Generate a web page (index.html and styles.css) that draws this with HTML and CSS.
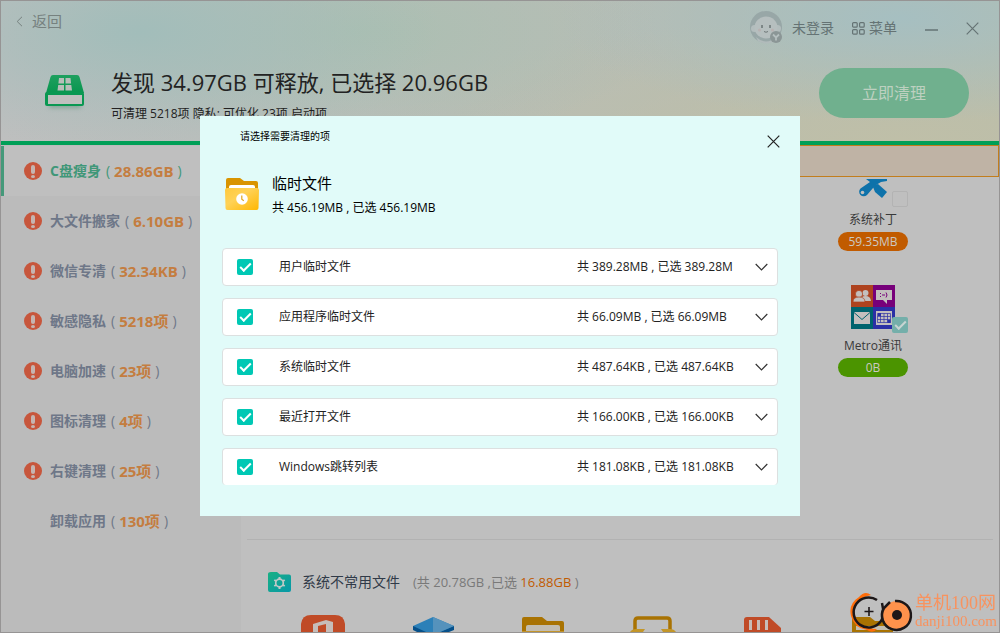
FILE: index.html
```html
<!DOCTYPE html>
<html lang="zh-CN">
<head>
<meta charset="utf-8">
<title>C盘瘦身</title>
<link rel="stylesheet" href="styles.css">
</head>
<body>
<div class="app">
  <header class="header">
    <div class="topbar">
      <a class="back" href="#">
        <svg width="7" height="11" viewBox="0 0 7 11"><path d="M6 .8 1.2 5.5 6 10.2" fill="none" stroke="currentColor"/></svg>
        返回
      </a>
      <div class="account">
        <a class="login" href="#">
          <svg width="34" height="34" viewBox="0 0 34 34">
            <circle cx="16" cy="16" r="16" fill="#98a7a7"/>
            <path d="M6 26q10 9 20 0l-1 4q-9 5-17 0z" fill="#b1bbbb"/>
            <circle cx="4.500" cy="17.500" r="3.500" fill="#b3bdbd"/><circle cx="27.500" cy="17.500" r="3.500" fill="#b3bdbd"/>
            <ellipse cx="16" cy="16.500" rx="11.500" ry="11" fill="#b6bfbf"/>
            <path d="M12 14v3M20 14v3" stroke="#6f7878" stroke-width="1.600"/>
            <path d="M14 20.500q2 1.500 4 0" fill="none" stroke="#6f7878"/>
            <circle cx="9.500" cy="19" r="1.500" fill="#b9b2b2"/><circle cx="22.500" cy="19" r="1.500" fill="#b9b2b2"/>
            <circle cx="26" cy="26" r="6" fill="#8b9696"/>
            <path d="m23 23.500 3 3 3-3M26 26v3.500" fill="none" stroke="#b5bfbf" stroke-width="1.800"/>
          </svg>
          <span>未登录</span>
        </a>
        <button class="menu" type="button">
          <svg width="13" height="13" viewBox="0 0 13 13" fill="none" stroke="currentColor" stroke-width="1.200"><rect x=".6" y=".6" width="4.600" height="4.600" rx="1"/><rect x="7.600" y=".6" width="4.600" height="4.600" rx="1"/><rect x=".6" y="7.600" width="4.600" height="4.600" rx="1"/><rect x="7.600" y="7.600" width="4.600" height="4.600" rx="1"/></svg>
          菜单
        </button>
        <button class="winbtn" type="button" aria-label="最小化"><svg width="13" height="13" viewBox="0 0 13 13"><path d="M0 8h13" stroke="currentColor" stroke-width="1.500"/></svg></button>
        <button class="winbtn" type="button" aria-label="关闭"><svg width="13" height="13" viewBox="0 0 13 13"><path d="m.7.700 11.600 11.600M12.300.7.700 12.300" stroke="currentColor" stroke-width="1.200"/></svg></button>
      </div>
    </div>
    <div class="hero">
      <svg class="hero-icon" width="40" height="40" viewBox="0 2 40 40">
        <defs>
          <linearGradient id="disk" x1="0" y1="0" x2="0" y2="1"><stop offset="0" stop-color="#1fa05f"/><stop offset="1" stop-color="#08964f"/></linearGradient>
          <filter id="soft" x="-30%" y="-50%" width="160%" height="220%"><feGaussianBlur stdDeviation="2"/></filter>
        </defs>
        <rect x="4" y="30" width="32" height="7" fill="#6f9b86" opacity=".7" filter="url(#soft)"/>
        <path d="M8 4h24q2 0 2.500 2L39 22H1L5.500 6Q6 4 8 4z" fill="url(#disk)"/>
        <rect x="0" y="21" width="39" height="14" rx="2" fill="#0a9852"/>
        <rect x="3" y="24" width="34" height="9" fill="#bfc0be"/>
        <path d="M14 7h5v5.500h-5.600zM20.500 7h5l.6 5.500h-5.600zM13.200 14H19v5.500h-6.500zM20.500 14h5.800l.7 5.500h-6.500z" fill="#b7beb9"/>
      </svg>
      <div class="summary">
        <h1 class="summary-title">发现 34.97GB 可释放, 已选择 20.96GB</h1>
        <p class="summary-note">可清理 5218项 隐私: 可优化 23项 启动项</p>
      </div>
      <button class="clean" type="button">立即清理</button>
    </div>
  </header>

  <div class="body">
    <nav class="sidebar">
      <a class="nav-item active" href="#"><i class="warn"></i><span class="nav-name">C盘瘦身</span>(<b class="nav-value">28.86GB</b>)</a>
      <a class="nav-item" href="#"><i class="warn"></i><span class="nav-name">大文件搬家</span>(<b class="nav-value">6.10GB</b>)</a>
      <a class="nav-item" href="#"><i class="warn"></i><span class="nav-name">微信专清</span>(<b class="nav-value">32.34KB</b>)</a>
      <a class="nav-item" href="#"><i class="warn"></i><span class="nav-name">敏感隐私</span>(<b class="nav-value">5218项</b>)</a>
      <a class="nav-item" href="#"><i class="warn"></i><span class="nav-name">电脑加速</span>(<b class="nav-value">23项</b>)</a>
      <a class="nav-item" href="#"><i class="warn"></i><span class="nav-name">图标清理</span>(<b class="nav-value">4项</b>)</a>
      <a class="nav-item" href="#"><i class="warn"></i><span class="nav-name">右键清理</span>(<b class="nav-value">25项</b>)</a>
      <a class="nav-item" href="#"><i class="warn none"></i><span class="nav-name">卸载应用</span>(<b class="nav-value">130项</b>)</a>
    </nav>

    <main class="main">
      <div class="notice"></div>
      <section class="tiles">
        <div class="tile">
          <div class="tile-icon">
            <svg width="44" height="24" viewBox="0 0 44 24" fill="#0e72aa">
              <path d="M15 0h21v2l-6 1-5 3-3 3-6 7a4.500 4.500 0 1 1-6.500-6.500L19 3z"/>
              <path d="m22 6 5-1 9 8-5 6-7-6-2-5z"/>
              <circle cx="11.500" cy="13.500" r="1.800" fill="#bfbfbf"/>
            </svg>
            <input class="tile-check" type="checkbox" id="patch">
          </div>
          <label class="tile-name" for="patch">系统补丁</label>
          <span class="pill orange">59.35MB</span>
        </div>
        <div class="tile">
          <div class="tile-icon">
            <svg width="44" height="44" viewBox="0 0 44 44">
              <path fill="#ae431f" d="M0 0h22v22H0z"/><path fill="#77007a" d="M22 0h22v22H22z"/><path fill="#00636e" d="M0 22h22v22H0z"/><path fill="#2b2fa6" d="M22 22h22v22H22z"/>
              <g fill="#c3bfbe"><circle cx="14.500" cy="8" r="3"/><path d="M9.500 16q0-5 5-5t5.500 5z"/><circle cx="8" cy="9" r="3.600" stroke="#ae431f" stroke-width=".7"/><path d="M2 17q0-5 6-5t6 5z" stroke="#ae431f" stroke-width=".7"/>
              <path d="M25 5h16v10h-5v4l-4-4h-7z"/><path d="M3 27h16v12H3zM25 26h16v14H25z"/></g>
              <path d="m3 27.500 8 7 8-7" fill="none" stroke="#00636e"/>
              <path d="M29.500 8v1m0 2v1m1.500-2h3m1-2.500q2 2.500 0 5" stroke="#77007a" fill="none"/>
              <path d="M26.500 28.500h13v9h-13zM26.500 31.500h13M26.500 34.500h13M29.500 28.500v9M33 28.500v9M36.500 28.500v9" fill="none" stroke="#2b2fa6" stroke-width=".7"/>
              <path d="M27 28h3v3h-3zM36.500 35h3v3h-3z" fill="#2b2fa6"/>
            </svg>
            <input class="tile-check" type="checkbox" id="metro" checked>
          </div>
          <label class="tile-name" for="metro">Metro通讯</label>
          <span class="pill green">0B</span>
        </div>
      </section>
      <section class="rare">
        <div class="rare-head">
          <svg width="24" height="22" viewBox="0 0 24 22">
            <defs><linearGradient id="teal" x1="0" y1="0" x2="1" y2="1"><stop offset="0" stop-color="#19b083"/><stop offset="1" stop-color="#0798a8"/></linearGradient></defs>
            <path d="M3 1h6l3 2.500h9q2 0 2 2V19q0 2-2 2H2q-2 0-2-2V3q0-2 3-2z" fill="url(#teal)"/>
            <g fill="none" stroke="#c1c9c7"><circle cx="11.500" cy="12" r="3.800" stroke-width="1.700"/><path d="M11.500 6v2M11.500 16v2M6.300 9l1.700 1M15 14l1.700 1M6.300 15 8 14M15 10l1.700-1" stroke-width="2"/></g>
          </svg>
          <h2 class="rare-title">系统不常用文件</h2>
          <p class="rare-note">(共 20.78GB ,已选 <span class="hot">16.88GB</span> )</p>
        </div>
        <div class="rare-row">
          <svg width="44" height="17" viewBox="0 0 44 17"><path d="M0 17V9Q1 0 10 0h24q9 0 10 9v8z" fill="#c04b27"/><path d="M12 17V9l13-4 7 2v10h-7V9l-8 2v6z" fill="#c6bdb9"/></svg>
          <svg width="44" height="17" viewBox="0 0 44 17"><path d="M2 11v4l4 2h32l5-2v-4z" fill="#06508a"/><path d="M22 2 2 11l13 6h14l14-6z" fill="#2c80b8"/><path d="m22 2 21 9-14 6h-7z" fill="#5592bc"/></svg>
          <svg width="44" height="17" viewBox="0 0 44 17"><path d="M1 17V4q0-2 2-2h18l5 4h15q2 0 2 2v9z" fill="#a97302"/><path d="M5 16v-4q0-2 2-2h30q2 0 2 2v4z" fill="#c2bdb1"/><path d="M1 16h42v1H1z" fill="#c3942b"/></svg>
          <svg width="46" height="17" viewBox="0 0 46 17"><path d="M5 15V6q0-3 3-3h29q3 0 3 3v9" fill="none" stroke="#a97302" stroke-width="3.500"/><path d="M0 17q2-3 6-3h9l-2 3zM31 14h9q4 0 6 3H33z" fill="#c39628"/></svg>
          <svg width="44" height="17" viewBox="0 0 44 17"><path d="M3 17V5q0-3 3-3h22l12 11v4z" fill="#c04b27"/><path d="M9.500 5v10M17.500 5v10M25.500 5v10" stroke="#c7bdb9" stroke-width="3"/></svg>
          <svg width="44" height="17" viewBox="0 0 44 17"><path d="M1 17V2h18l5 4h18v11z" fill="#a97302"/><path d="M5 15v-4h34v4z" fill="#c2bdb1"/></svg>
        </div>
      </section>
    </main>
  </div>
</div>

<div class="overlay">
  <section class="dialog" role="dialog" aria-labelledby="dlg-title">
    <div class="dialog-head">
      <h2 class="dialog-title" id="dlg-title">请选择需要清理的项</h2>
      <button class="dialog-close" type="button" aria-label="关闭"><svg width="13" height="13" viewBox="0 0 13 13"><path d="m.7.700 11.600 11.600M12.300.7.700 12.300" stroke="#222" stroke-width="1.200"/></svg></button>
    </div>
    <div class="group">
      <svg width="34" height="34" viewBox="0 0 34 34">
        <defs><linearGradient id="gold" x1="0" y1="0" x2="1" y2="1"><stop offset="0" stop-color="#ffc93c"/><stop offset=".4" stop-color="#ffd257"/><stop offset="1" stop-color="#ffb700"/></linearGradient></defs>
        <path d="M1 14V3q0-2 2-2h12l4 3h12q2 0 2 2v8z" fill="#d99400"/>
        <path d="M4 14v-4q0-2 2-2h22q2 0 2 2v4z" fill="#fff"/>
        <path d="M0 13q0-2 2-2h30q2 0 2 2l-.5 18q0 2-2 2H2.500q-2 0-2-2z" fill="url(#gold)"/>
        <circle cx="17" cy="22" r="5.800" fill="#fff"/><path d="M16.800 18.500v3.800l2 1.500" fill="none" stroke="#e0a51c" stroke-width="1.200"/>
      </svg>
      <div class="group-text">
        <h3 class="group-name">临时文件</h3>
        <p class="group-size">共 456.19MB , 已选 456.19MB</p>
      </div>
    </div>
    <ul class="rows">
      <li class="row"><input class="check" type="checkbox" id="r1" checked><label class="row-name" for="r1">用户临时文件</label><span class="row-size">共 389.28MB , 已选 389.28M</span><button class="expand" type="button" aria-label="展开"><svg width="13" height="8" viewBox="0 0 13 8"><path d="m.7 1 5.800 5.800L12.300 1" fill="none" stroke="#333" stroke-width="1.200"/></svg></button></li>
      <li class="row"><input class="check" type="checkbox" id="r2" checked><label class="row-name" for="r2">应用程序临时文件</label><span class="row-size">共 66.09MB , 已选 66.09MB</span><button class="expand" type="button" aria-label="展开"><svg width="13" height="8" viewBox="0 0 13 8"><path d="m.7 1 5.800 5.800L12.300 1" fill="none" stroke="#333" stroke-width="1.200"/></svg></button></li>
      <li class="row"><input class="check" type="checkbox" id="r3" checked><label class="row-name" for="r3">系统临时文件</label><span class="row-size">共 487.64KB , 已选 487.64KB</span><button class="expand" type="button" aria-label="展开"><svg width="13" height="8" viewBox="0 0 13 8"><path d="m.7 1 5.800 5.800L12.300 1" fill="none" stroke="#333" stroke-width="1.200"/></svg></button></li>
      <li class="row"><input class="check" type="checkbox" id="r4" checked><label class="row-name" for="r4">最近打开文件</label><span class="row-size">共 166.00KB , 已选 166.00KB</span><button class="expand" type="button" aria-label="展开"><svg width="13" height="8" viewBox="0 0 13 8"><path d="m.7 1 5.800 5.800L12.300 1" fill="none" stroke="#333" stroke-width="1.200"/></svg></button></li>
      <li class="row last"><input class="check" type="checkbox" id="r5" checked><label class="row-name" for="r5">Windows跳转列表</label><span class="row-size">共 181.08KB , 已选 181.08KB</span><button class="expand" type="button" aria-label="展开"><svg width="13" height="8" viewBox="0 0 13 8"><path d="m.7 1 5.800 5.800L12.300 1" fill="none" stroke="#333" stroke-width="1.200"/></svg></button></li>
    </ul>
  </section>
</div>

<div class="mark">
  <svg width="64" height="42" viewBox="0 0 64 42" fill="none">
    <path d="M22 4Q16-1 10 6-1 13 2 25q3 12 16 14 6 4 10-1-8 0-16-5Q3 25 6 15 10 6 22 4z" fill="#ff6d0a"/>
    <path d="M28 9A15 15 0 1 0 32 30Q36 25 33 12" stroke="#1d1718" stroke-width="2.500"/>
    <path d="M20 16v9M15.500 20.500h9" stroke="#1d1718" stroke-width="1.600"/>
    <circle cx="48" cy="24" r="14" fill="#ff924c"/>
    <path d="M46 10A14.500 14.500 0 1 1 35 17l6-6" stroke="#1d1718" stroke-width="2.500"/>
    <circle cx="48" cy="24" r="5" fill="#1d1718"/>
  </svg>
  <div class="mark-text"><span class="mark-name">单机100网</span><span class="mark-url">danji100.com</span></div>
</div>
</body>
</html>
```

FILE: styles.css
```css
* { box-sizing: border-box; }

body {
  margin: 0;
  font: 12px/18px "Open Sans", "Noto Sans CJK SC", sans-serif;
  color: #222;
  background: #bfbfbf;
}

h1, h2, h3, p, ul { margin: 0; padding: 0; font-weight: 400; }
ul { list-style: none; }
a { color: inherit; text-decoration: none; }
button { padding: 0; border: 0; background: none; font: inherit; color: inherit; }
svg { display: block; flex: none; }

.app {
  display: flex;
  flex-direction: column;
  min-height: 100vh;
  border: 1px solid #969494;
}

/* header */
.header {
  border-bottom: 4px solid #009f57;
  background:
    radial-gradient(ellipse 30% 90% at 14% 22%, #a2bdba 0%, transparent 100%),
    radial-gradient(ellipse 34% 75% at 90% 12%, #a6bfc1 0%, transparent 100%),
    radial-gradient(ellipse 30% 80% at 36% 22%, #abbfb1 0%, transparent 100%),
    radial-gradient(ellipse 55% 90% at 90% 100%, #bfbfa8 0%, transparent 100%),
    linear-gradient(90deg, #bfbfbf 0%, #b8bdb8 45%, #b6bcac 100%);
}
.topbar {
  display: flex;
  justify-content: space-between;
  align-items: center;
  height: 54px;
  padding: 0 20px 0 15px;
  font-size: 14px;
  line-height: 20px;
}
.back {
  display: flex;
  align-items: center;
  align-self: flex-start;
  gap: 9px;
  padding-top: 10px;
  font-size: 15px;
  color: #76817f;
}
.account { display: flex; align-items: center; gap: 18px; color: #657374; }
.login { display: flex; align-items: center; gap: 8px; }
.menu { display: flex; align-items: center; gap: 4px; }
.winbtn { margin-left: 10px; }
.hero {
  display: flex;
  align-items: center;
  height: 86px;
  padding: 0 30px 10px 44px;
}
.summary { flex: 1; margin-left: 26px; padding-top: 3px; }
.summary-title { font-size: 22px; line-height: 30px; }
.summary-note { margin-top: 8px; }
.clean {
  width: 150px;
  height: 50px;
  border-radius: 25px;
  background: #70b08e;
  color: #bdd0c0;
  font-size: 16px;
}

/* sidebar */
.body { display: flex; flex: 1; }
.sidebar { width: 240px; padding-top: 1px; background: #bbb; }
.nav-item {
  display: flex;
  align-items: center;
  gap: 4px;
  height: 50px;
  padding-left: 20px;
  border-left: 3px solid transparent;
  font-size: 14px;
  color: #6e7788;
}
.nav-item.active { border-color: #45997a; background: #bfbfbf; color: #3f9778; }
.nav-name { margin: 0 1px 0 4px; font-weight: 700; }
.nav-value { color: #c47d40; font-size: 15px; font-weight: 700; }
.warn {
  display: flex;
  flex-direction: column;
  align-items: center;
  justify-content: center;
  gap: 1px;
  width: 18px;
  height: 18px;
  border-radius: 50%;
  background: #c7563c;
}
.warn::before { content: ""; width: 4px; height: 9px; border-radius: 2px; background: #c5b5b1; }
.warn::after { content: ""; width: 4px; height: 3px; border-radius: 50%; background: #c5b5b1; }
.warn.none { visibility: hidden; }

/* main area */
.main { display: flex; flex: 1; flex-direction: column; min-width: 0; }
.notice { height: 32px; border: 1px solid #c27d1c; background: #bfb3a5; }
.tiles {
  flex: 1;
  display: grid;
  grid-template-columns: repeat(6, 110px);
  align-content: start;
  row-gap: 34px;
  padding: 2px 0 0 27px;
}
.tile { grid-column: 6; display: flex; flex-direction: column; align-items: center; }
.tile-icon { position: relative; }
.tile-check {
  appearance: none;
  position: absolute;
  right: -13px;
  bottom: -4px;
  width: 16px;
  height: 16px;
  margin: 0;
  border: 1px solid #b3b3b3;
  border-radius: 2px;
}
.tile-check:checked { border: 0; background: #74afaa; }
.tile-name { margin-top: 8px; color: #393939; }
.pill {
  width: 70px;
  margin-top: 3px;
  border-radius: 10px;
  line-height: 19px;
  text-align: center;
  color: #ccc9c2;
}
.orange { background: #c15b00; }
.green { background: #4b9400; }
.rare { margin: 0 6px; padding: 31px 0 0 21px; border-top: 1px solid #b2b2b2; }
.rare-head { display: flex; align-items: center; height: 22px; }
.rare-title { margin: 0 13px 0 10px; font-size: 14px; color: #303a48; }
.rare-note { font-size: 13px; color: #797979; }
.hot { color: #c15b00; }
.rare-row {
  display: grid;
  grid-template-columns: repeat(6, 110px);
  justify-items: center;
  margin: 22px 0 0;
}

/* dialog */
.overlay {
  position: fixed;
  inset: 0;
  display: flex;
  align-items: center;
  justify-content: center;
  padding-bottom: 1px;
}
.dialog {
  width: 600px;
  padding: 11px 22px 31px;
  background: #e1fbf9;
  color: #000;
}
.dialog-head { display: flex; justify-content: space-between; padding-left: 18px; }
.dialog-title { font-size: 10px; }
.dialog-close { width: 13px; height: 13px; margin: 8px -2px 0 0; }
.group { display: flex; align-items: center; gap: 13px; margin: 23px 0 31px 3px; }
.group-name { font-size: 15px; line-height: 24px; }
.group-size { margin-top: 4px; }
.rows { display: flex; flex-direction: column; gap: 12px; }
.row {
  display: flex;
  align-items: center;
  height: 38px;
  padding: 0 9px 0 14px;
  border: 1px solid #dce0e0;
  border-radius: 4px;
  background: #fff;
  color: #222;
}
.row.last { height: 37px; border-bottom: 0; }
.row-name { flex: 1; margin-left: 26px; }
.row-size { width: 165px; margin-right: 13px; white-space: nowrap; }
.check {
  appearance: none;
  width: 16px;
  height: 16px;
  margin: 0;
  border-radius: 2px;
  background: #00c8b4;
}
.check::after, .tile-check:checked::after {
  content: "";
  display: block;
  width: 9px;
  height: 4px;
  margin: 4px 0 0 3px;
  border: solid #fff;
  border-width: 0 0 2px 2px;
  transform: rotate(-45deg);
}
.tile-check:checked::after { border-color: #c8d4d2; }

/* site mark */
.mark {
  position: fixed;
  right: 3px;
  bottom: 0;
  display: flex;
  align-items: center;
  gap: 2px;
  color: #f8935f;
}
.mark-text { display: flex; flex-direction: column; line-height: 18px; }
.mark-name { font-family: "Liberation Serif", "Noto Sans CJK SC", serif; font-size: 18px; }
.mark-url { font-family: "Liberation Serif", serif; font-size: 15px; }
```
